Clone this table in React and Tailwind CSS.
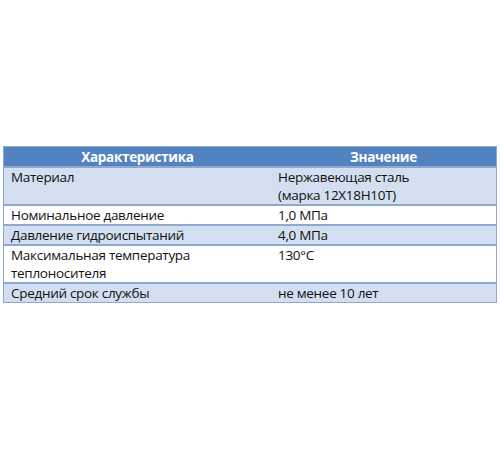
export default function App() {
  const rows = [
    { k: ['Материал'], v: ['Нержавеющая сталь', '(марка 12Х18Н10Т)'], shade: true },
    { k: ['Номинальное давление'], v: ['1,0 МПа'], shade: false },
    { k: ['Давление гидроиспытаний'], v: ['4,0 МПа'], shade: true },
    { k: ['Максимальная температура', 'теплоносителя'], v: ['130°C'], shade: false },
    { k: ['Средний срок службы'], v: ['не менее 10 лет'], shade: true },
  ];

  return (
    <div
      className="w-[500px] h-[450px] bg-white pt-[146px] px-[3px]"
      style={{ fontFamily: '"Open Sans", "Noto Sans", sans-serif' }}
    >
      <div className="border border-[#8fa9cc] text-[13.5px] leading-[18px] text-[#111] tracking-[-0.3px]">
        <div className="grid grid-cols-[267px_1fr] h-[19px] items-center bg-[#5282c0] text-white font-bold">
          <div className="text-center">Характеристика</div>
          <div className="text-center">Значение</div>
        </div>
        {rows.map((r, i) => (
          <div
            key={i}
            className={`grid grid-cols-[267px_1fr] border-t-2 border-[#8fa9cc] ${r.shade ? 'bg-[#d3dff0]' : 'bg-white'}`}
          >
            <div className="pl-[7px]">
              {r.k.map((t) => (
                <div key={t}>{t}</div>
              ))}
            </div>
            <div className="pl-[7px]">
              {r.v.map((t) => (
                <div key={t}>{t}</div>
              ))}
            </div>
          </div>
        ))}
      </div>
    </div>
  );
}
